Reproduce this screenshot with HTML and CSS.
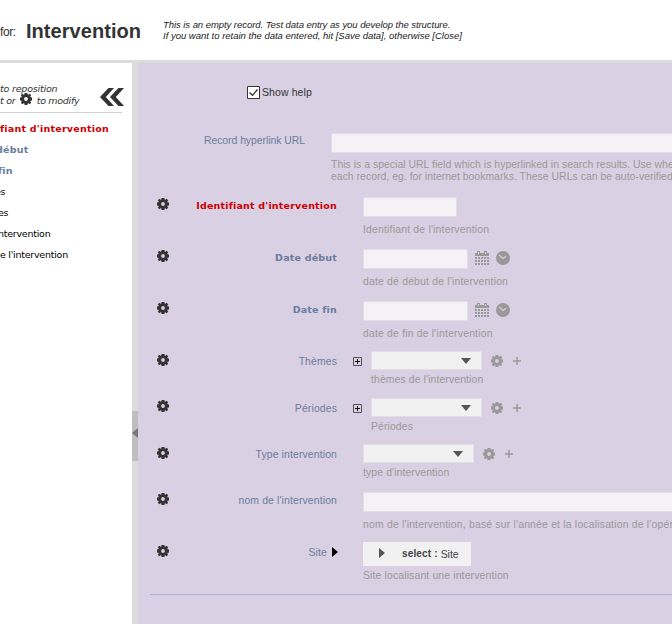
FILE: index.html
```html
<!DOCTYPE html>
<html lang="fr">
<head>
<meta charset="utf-8">
<title>Intervention</title>
<link rel="stylesheet" href="styles.css">
</head>
<body>
<svg class="defs" aria-hidden="true">
  <symbol id="gear" viewBox="0 0 12 12"><path fill-rule="evenodd" d="M4.600 0h2.800l.3 1.400.7.3L9.700.8l1.500 1.500-.9 1.300.3.700 1.400.3v2.800l-1.400.3-.3.700.9 1.300-1.500 1.500-1.300-.9-.7.3L7.400 12H4.600l-.3-1.400-.7-.3-1.300.9L.8 9.700l.9-1.300-.3-.7L0 7.400V4.600l1.400-.3.3-.7L.8 2.300 2.300.8l1.300.9.7-.3zM6 4.100a1.900 1.900 0 1 0 0 3.800 1.900 1.900 0 0 0 0-3.800z"/></symbol>
  <symbol id="calendar" viewBox="0 0 14 14"><path d="M0 5V2h2V0h3v2h4V0h3v2h2v3z"/><path d="M0 6h2v2H0zM3 6h2v2H3zM6 6h2v2H6zM9 6h2v2H9zM12 6h2v2h-2zM0 9h2v2H0zM3 9h2v2H3zM6 9h2v2H6zM9 9h2v2H9zM12 9h2v2h-2zM0 12h2v2H0zM3 12h2v2H3zM6 12h2v2H6zM9 12h2v2H9zM12 12h2v2h-2z"/><path class="ring" d="M3 1h1v2H3zM10 1h1v2h-1z"/></symbol>
  <symbol id="clock" viewBox="0 0 14 14"><circle cx="7" cy="7" r="7"/><path class="hands" d="M3.200 4 7 7.500l3-2.300"/></symbol>
  <symbol id="plus" viewBox="0 0 8 8"><path d="M3.300 0h1.400v3.300H8v1.400H4.700V8H3.300V4.700H0V3.300h3.300z"/></symbol>
  <symbol id="expand" viewBox="0 0 9 9"><path class="box" d="M.5.5h8v8h-8z"/><path class="cross" d="M2 4h5v1H2zM4 2h1v5H4z"/></symbol>
</svg>
<header class="header">
  <span class="for">for:</span>
  <h1 class="title">Intervention</h1>
  <p class="note"><span class="note-first">This is an empty record. Test data entry as you develop the structure.</span><br>If you want to retain the data entered, hit [Save data], otherwise [Close]</p>
</header>
<div class="body">
  <nav class="sidebar">
    <div class="tools">
      <p class="hint"><span class="hint-first">to reposition</span><br>t or <svg class="gear"><use href="#gear"/></svg> to modify</p>
      <svg class="collapse" viewBox="0 0 24 18"><path d="M14 0 5.800 9l8.200 9H8.500L0 9l8.500-9zM24 0l-8.200 9 8.200 9h-5.500L10 9l8.500-9z"/></svg>
    </div>
    <ul class="tree">
      <li class="required">fiant d'intervention</li>
      <li class="recommended start">début</li>
      <li class="recommended end">fin</li>
      <li class="cut-more">es</li>
      <li class="cut">es</li>
      <li class="cut">ntervention</li>
      <li>e l'intervention</li>
    </ul>
  </nav>
  <div class="splitter"><div class="handle"></div></div>
  <main class="form">
    <label class="show-help"><svg class="check" viewBox="0 0 13 13"><path class="check-box" d="M.5.5h12v12H.5z"/><path class="tick" d="m2.500 6.500 3 2.800 5-5.800"/></svg><span>Show help</span></label>
    <section class="url-row">
      <span class="url-label">Record hyperlink URL</span>
      <div class="input wide"></div>
      <p class="url-help">This is a special URL field which is hyperlinked in search results. Use when<br>each record, eg. for internet bookmarks. These URLs can be auto-verified</p>
    </section>
    <section class="row">
      <svg class="gear"><use href="#gear"/></svg><span class="label required">Identifiant d'intervention</span>
      <div class="field"><div class="input id"></div><p class="help">Identifiant de l'intervention</p></div>
    </section>
    <section class="row">
      <svg class="gear"><use href="#gear"/></svg><span class="label recommended">Date début</span>
      <div class="field"><div class="line"><div class="input date"></div><svg class="icon14 cal"><use href="#calendar"/></svg><svg class="icon14 clock"><use href="#clock"/></svg></div><p class="help">date dé début de l'intervention</p></div>
    </section>
    <section class="row date-end">
      <svg class="gear"><use href="#gear"/></svg><span class="label recommended">Date fin</span>
      <div class="field"><div class="line"><div class="input date"></div><svg class="icon14 cal"><use href="#calendar"/></svg><svg class="icon14 clock"><use href="#clock"/></svg></div><p class="help">date de fin de l'intervention</p></div>
    </section>
    <section class="row choice themes">
      <svg class="gear"><use href="#gear"/></svg><span class="label">Thèmes</span><svg class="expand"><use href="#expand"/></svg>
      <div class="field"><div class="line"><div class="select"></div><svg class="gear muted"><use href="#gear"/></svg><svg class="plus"><use href="#plus"/></svg></div><p class="help">thèmes de l'intervention</p></div>
    </section>
    <section class="row choice periods">
      <svg class="gear"><use href="#gear"/></svg><span class="label">Périodes</span><svg class="expand"><use href="#expand"/></svg>
      <div class="field"><div class="line"><div class="select"></div><svg class="gear muted"><use href="#gear"/></svg><svg class="plus"><use href="#plus"/></svg></div><p class="help">Périodes</p></div>
    </section>
    <section class="row choice type">
      <svg class="gear"><use href="#gear"/></svg><span class="label">Type intervention</span>
      <div class="field"><div class="line"><div class="select"></div><svg class="gear muted"><use href="#gear"/></svg><svg class="plus"><use href="#plus"/></svg></div><p class="help">type d'intervention</p></div>
    </section>
    <section class="row name">
      <svg class="gear"><use href="#gear"/></svg><span class="label">nom de l'intervention</span>
      <div class="field"><div class="input wide"></div><p class="help">nom de l'intervention, basé sur l'année et la localisation de l'opération</p></div>
    </section>
    <section class="row site">
      <svg class="gear"><use href="#gear"/></svg><span class="label">Site</span><i class="arrow"></i>
      <div class="field"><div class="button"><i class="arrow"></i><b>select :</b><span>Site</span></div><p class="help">Site localisant une intervention</p></div>
    </section>
    <hr class="rule">
  </main>
</div>
</body>
</html>
```

FILE: styles.css
```css
* { box-sizing: border-box; }
html, body { margin: 0; height: 100%; overflow: hidden; }
body { font: 10.400px/12px "Liberation Sans", Arial, sans-serif; background: #fff; color: #333; }
p, h1, ul { margin: 0; padding: 0; }
svg { display: block; flex: none; }
.defs { width: 0; height: 0; position: absolute; }

.header { height: 63px; border-bottom: 3px solid #dcdcdc; display: flex; white-space: nowrap; }
.for { width: 26px; padding-top: 24px; font-size: 12px; line-height: 16px; letter-spacing: -.4px; }
.title { width: 137px; padding-top: 20px; font-size: 20px; line-height: 22px; letter-spacing: .05px; }
.note { padding-top: 19px; font-size: 9.500px; line-height: 11px; font-style: italic; color: #222; }
.note-first { letter-spacing: -.055px; }

.body { display: flex; height: 561px; }
.sidebar { width: 132px; flex: none; overflow: hidden; white-space: nowrap; font-family: "DejaVu Sans", sans-serif; }
.tools { height: 50px; width: 122px; border-bottom: 1px solid #d0d0d0; display: flex; justify-content: space-between; }
.hint { padding-top: 20px; font: italic 9.500px/12px "DejaVu Sans", sans-serif; letter-spacing: -.3px; }
.hint-first { letter-spacing: -.2px; }
.hint .gear { display: inline-block; vertical-align: -1px; margin: -2px 2px 0; }
.collapse { width: 24px; height: 18px; margin: 25px -2px 0 0; fill: #333; }
.tree { list-style: none; padding-top: 5px; font-size: 9.500px; color: #000; letter-spacing: -.25px; }
.tree li { height: 21px; line-height: 21px; }
.tree .required, .tree .recommended { font-weight: bold; letter-spacing: .23px; }
.tree .start { text-indent: -4px; }
.tree .end { text-indent: -2px; }
.tree .cut { text-indent: -2px; }
.tree .cut-more { text-indent: -5px; }
.required { color: #c00; }
.recommended { color: #6a7c9e; }

.splitter { width: 6px; flex: none; background: #dcdcdc; padding-top: 348px; }
.handle { height: 50px; background: #bebebe; display: flex; align-items: center; }
.handle::before { content: ""; margin-top: -6px; border: solid transparent; border-width: 5px 6px 5px 0; border-right-color: #777; }

.form { flex: 1; min-width: 0; overflow: hidden; background: #d9d0e3; padding-left: 12px; white-space: nowrap; }
.show-help { display: flex; gap: 2px; height: 70px; padding: 23px 0 0 97px; font-size: 10.500px; line-height: 13px; letter-spacing: .1px; }
.check { width: 13px; height: 13px; }
.check-box { fill: #fff; stroke: #333; }
.tick { fill: none; stroke: #333; stroke-width: 1.300; }

.url-row { display: grid; grid-template-columns: 181px 1fr; height: 64px; grid-template-rows: 20px auto; align-content: start; }
.url-label { text-align: right; padding: 2px 26px 0 0; color: #6a7c9e; letter-spacing: -.03px; }
.url-help { grid-column: 2; padding-top: 6px; color: #999; letter-spacing: .04px; }
.input { height: 20px; background: #f4f2f5; border: 1px solid #e0dee6; }
.wide { width: 400px; }
.id { width: 94px; }
.date { width: 105px; }

.row { display: flex; height: 52px; }
.row > .gear { margin: 1px 18px 0 7px; }
.gear { width: 12px; height: 12px; fill: #333; }
.label { width: 150px; flex: none; padding-top: 3px; text-align: right; color: #6a7c9e; letter-spacing: .14px; }
.label.required { color: #c00; }
.label.required, .label.recommended { font: bold 9.500px/12px "DejaVu Sans", sans-serif; letter-spacing: .2px; }
.field { margin-left: 26px; }
.line { display: flex; }
.help { padding-top: 7px; color: #999; letter-spacing: .2px; }
.icon14 { width: 14px; height: 14px; fill: #999; margin: 2px 0 0 7px; }
.ring { fill: #d9d0e3; }
.hands { fill: none; stroke: #d9d0e3; stroke-width: 1.200; }

.date-end { height: 50px; }
.themes { height: 47px; }
.periods { height: 46px; }
.type { height: 48px; }
.choice > .gear { margin-top: 3px; }
.periods > .gear { margin-top: 2px; }
.choice .label { padding-top: 5px; }
.choice .help { padding-top: 4px; letter-spacing: .12px; }
.expand { width: 9px; height: 9px; margin: 6px 0 0 16px; }
.expand + .field { margin-left: 9px; }
.box { fill: none; stroke: #555; }
.cross { fill: #111; }
.select { width: 111px; height: 19px; background: #f1f1f1; border: 1px solid #e0dee6; display: flex; align-items: center; justify-content: flex-end; padding-right: 10px; }
.select::after { content: ""; border: solid transparent; border-width: 6px 5px 0; border-top-color: #555; }
.muted { fill: #999; margin: 4px 0 0 9px; }
.plus { width: 8px; height: 8px; fill: #999; margin: 6px 0 0 10px; }
.name { height: 50px; }

.site > .gear { margin-top: 3px; }
.site .label { width: 140px; padding-top: 5px; }
.arrow { flex: none; width: 0; height: 0; border: solid transparent; border-width: 5px 0 5px 6px; border-left-color: #000; }
.site > .arrow { margin: 5px 0 0 5px; }
.site .field { margin-left: 25px; }
.button { width: 108px; height: 24px; background: #f1f1f1; display: flex; align-items: center; color: #444; }
.button .arrow { border-left-color: #555; margin: -2px 17px 0 16px; }
.button b { font-size: 10px; margin-right: 3px; letter-spacing: .15px; }
.button span { padding-top: 1px; }
.site .help { padding-top: 4px; letter-spacing: .15px; }
.rule { margin: 0; border: 0; height: 1px; background: #9fb5d0; }
```
